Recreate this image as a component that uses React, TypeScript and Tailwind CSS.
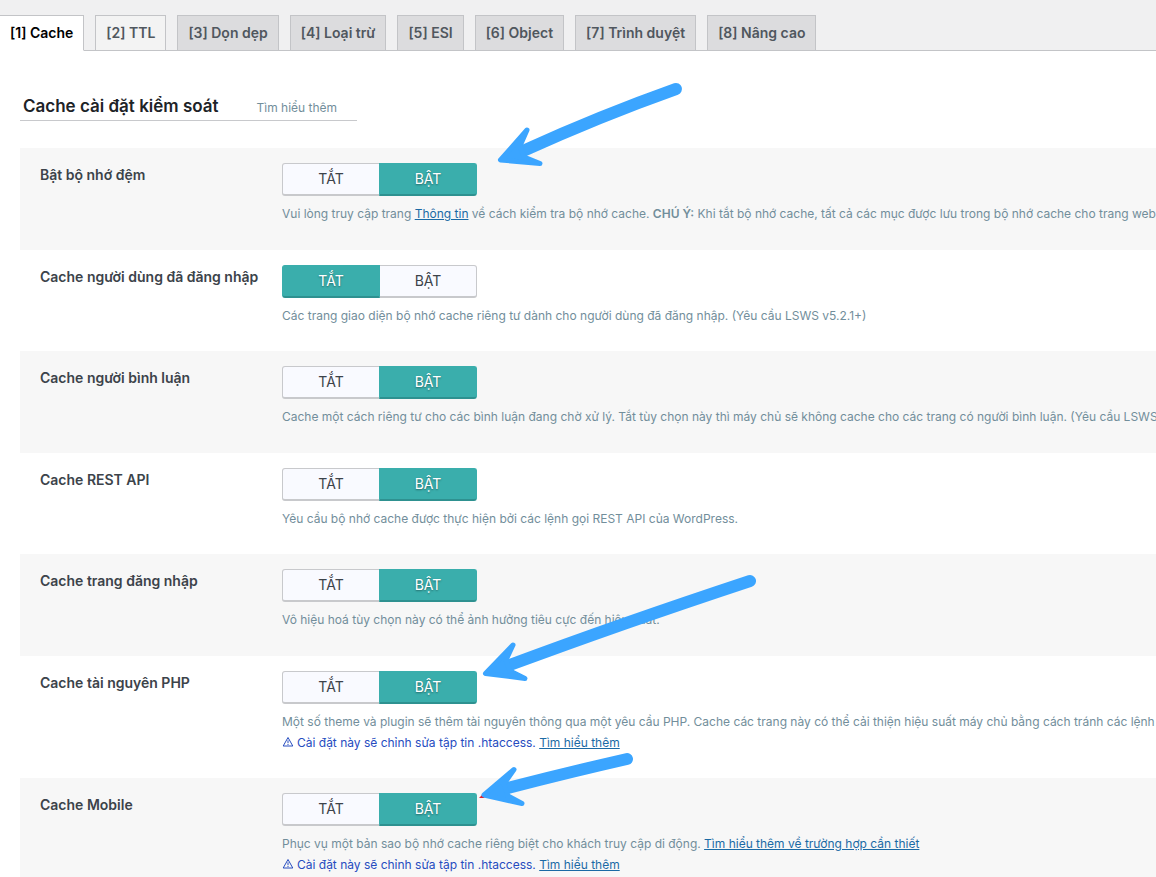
import React, { useState } from "react";
import clsx from "clsx";

type Setting = {
  id: string;
  title: string;
  on: boolean;
  desc: React.ReactNode;
  htaccess?: boolean;
};

const tabs = [
  "[1] Cache",
  "[2] TTL",
  "[3] Dọn dẹp",
  "[4] Loại trừ",
  "[5] ESI",
  "[6] Object",
  "[7] Trình duyệt",
  "[8] Nâng cao",
];

const settings: Setting[] = [
  {
    id: "cache",
    title: "Bật bộ nhớ đệm",
    on: true,
    desc: (
      <>
        Vui lòng truy cập trang <DocLink>Thông tin</DocLink> về cách kiểm tra bộ
        nhớ cache. <strong className="font-semibold">CHÚ Ý:</strong> Khi tắt bộ
        nhớ cache, tất cả các mục được lưu trong bộ nhớ cache cho trang web
      </>
    ),
  },
  {
    id: "cache-priv",
    title: "Cache người dùng đã đăng nhập",
    on: false,
    desc: "Các trang giao diện bộ nhớ cache riêng tư dành cho người dùng đã đăng nhập. (Yêu cầu LSWS v5.2.1+)",
  },
  {
    id: "cache-commenter",
    title: "Cache người bình luận",
    on: true,
    desc: "Cache một cách riêng tư cho các bình luận đang chờ xử lý. Tắt tùy chọn này thì máy chủ sẽ không cache cho các trang có người bình luận. (Yêu cầu LSWS v5.2.1+)",
  },
  {
    id: "cache-rest",
    title: "Cache REST API",
    on: true,
    desc: "Yêu cầu bộ nhớ cache được thực hiện bởi các lệnh gọi REST API của WordPress.",
  },
  {
    id: "cache-login",
    title: "Cache trang đăng nhập",
    on: true,
    desc: "Vô hiệu hoá tùy chọn này có thể ảnh hưởng tiêu cực đến hiệu suất.",
  },
  {
    id: "cache-resources",
    title: "Cache tài nguyên PHP",
    on: true,
    desc: "Một số theme và plugin sẽ thêm tài nguyên thông qua một yêu cầu PHP. Cache các trang này có thể cải thiện hiệu suất máy chủ bằng cách tránh các lệnh gọi",
    htaccess: true,
  },
  {
    id: "cache-mobile",
    title: "Cache Mobile",
    on: true,
    desc: (
      <>
        Phục vụ một bản sao bộ nhớ cache riêng biệt cho khách truy cập di động.{" "}
        <DocLink>Tìm hiểu thêm về trường hợp cần thiết</DocLink>
      </>
    ),
    htaccess: true,
  },
];

function DocLink({ children }: { children: React.ReactNode }) {
  return (
    <a href="#docs" className="text-[#1b6aa5] underline">
      {children}
    </a>
  );
}

function Toggle({ id, title, on }: { id: string; title: string; on: boolean }) {
  const [value, setValue] = useState(on);

  const options = [
    { label: "TẮT", state: false },
    { label: "BẬT", state: true },
  ];

  return (
    <div role="radiogroup" aria-label={title} className="flex">
      {options.map((option) => (
        <label
          key={option.label}
          className={clsx(
            "flex h-[33px] w-[98px] cursor-pointer items-center justify-center border border-b-2 text-sm",
            option.state ? "-ml-px rounded-r-[3px]" : "rounded-l-[3px]",
            value === option.state
              ? "z-1 border-[#3aaeac] border-b-[#2e9190] bg-[#3aaeac] text-white text-shadow-[0_1px_2px_rgb(0_0_0_/_0.4)]"
              : "border-[#c8c9cc] bg-[#f9faff] text-[#3c434a]"
          )}
        >
          <input
            type="radio"
            name={id}
            checked={value === option.state}
            onChange={() => setValue(option.state)}
            className="sr-only"
          />
          {option.label}
        </label>
      ))}
    </div>
  );
}

function WarningIcon() {
  return (
    <svg
      viewBox="0 0 12 12"
      className="mr-[3px] inline-block size-3 align-[-1px]"
      fill="none"
      stroke="currentColor"
      aria-hidden="true"
    >
      <path d="M6 1.5 L10.8 10 H1.2 Z" strokeLinejoin="round" />
      <path d="M6 4.3 V7.2 M6 8 V9" />
    </svg>
  );
}

function SettingRow({ setting }: { setting: Setting }) {
  return (
    <div className="flex pt-[15px] pb-[25px] pl-5 odd:bg-[#f7f7f7] odd:pb-[26px]">
      <div className="w-[242px] shrink-0 pt-0.5 text-sm font-semibold text-[#3c434a]">
        {setting.title}
      </div>
      <div>
        <Toggle id={setting.id} title={setting.title} on={setting.on} />
        <div className="mt-[7px] text-xs leading-[21px] whitespace-nowrap text-[#728e9b]">
          <p>{setting.desc}</p>
          {setting.htaccess && (
            <p className="text-[#264cbf]">
              <WarningIcon />
              Cài đặt này sẽ chỉnh sửa tập tin .htaccess.{" "}
              <DocLink>Tìm hiểu thêm</DocLink>
            </p>
          )}
        </div>
      </div>
    </div>
  );
}

// hand-drawn pointers over the settings that matter
function Arrows() {
  return (
    <svg
      width="800"
      height="877"
      viewBox="0 0 800 877"
      className="pointer-events-none absolute top-0 left-0 z-10"
      fill="#3ba5ff"
      stroke="#3ba5ff"
      strokeLinecap="round"
      strokeLinejoin="round"
      aria-hidden="true"
    >
      <path d="M676 89 Q600 116 523 151" fill="none" strokeWidth="12" />
      <path d="M527 130 L500.500 160 L540 163.500 L524 157 L520 146 Z" strokeWidth="5" />
      <path d="M750 581 Q620 624 510 665" fill="none" strokeWidth="12" />
      <path d="M513 645 L485.500 673.500 L525 678.500 L510 671 L506 660 Z" strokeWidth="5" />
      <path d="M479 798 L482 795 L485 798 Z" fill="#e02030" stroke="none" />
      <path d="M627 759 Q570 772 508 788" fill="none" strokeWidth="12" />
      <path d="M514 769.500 L484 795 L522 803.500 L508 796 L504 784 Z" strokeWidth="5" />
    </svg>
  );
}

export default function App() {
  return (
    <div className="relative min-h-screen overflow-hidden bg-white font-[Inter,'Liberation_Sans',sans-serif]">
      <nav className="flex gap-[11px] border-b border-[#c3c4c7] bg-[#f0f0f1] pt-[15px]">
        {tabs.map((tab, i) => (
          <a
            key={tab}
            href={`#tab-${i + 1}`}
            className={clsx(
              "-mb-px border border-[#c3c4c7] px-2.5 pt-[5px] pb-[5px] text-sm leading-6 font-semibold whitespace-nowrap",
              i === 0 && "border-b-white border-l-0 bg-white text-black",
              i === 1 && "bg-[#f3f3f3] text-[#50575e]",
              i > 1 && "bg-[#dcdcde] text-[#50575e]"
            )}
          >
            {tab}
          </a>
        ))}
      </nav>

      <main className="pt-[41px] pl-5">
        <div className="mb-[27px] flex w-fit items-baseline gap-[38px] border-b border-[#c8c9cc] pr-5 pl-[3px]">
          <h3 className="text-[17px] leading-7 font-semibold text-[#1d2327]">
            Cache cài đặt kiểm soát
          </h3>
          <a href="#learn-more" className="text-xs text-[#728e9b]">
            Tìm hiểu thêm
          </a>
        </div>
        <div>
          {settings.map((setting) => (
            <SettingRow key={setting.id} setting={setting} />
          ))}
        </div>
      </main>
      <Arrows />
    </div>
  );
}
